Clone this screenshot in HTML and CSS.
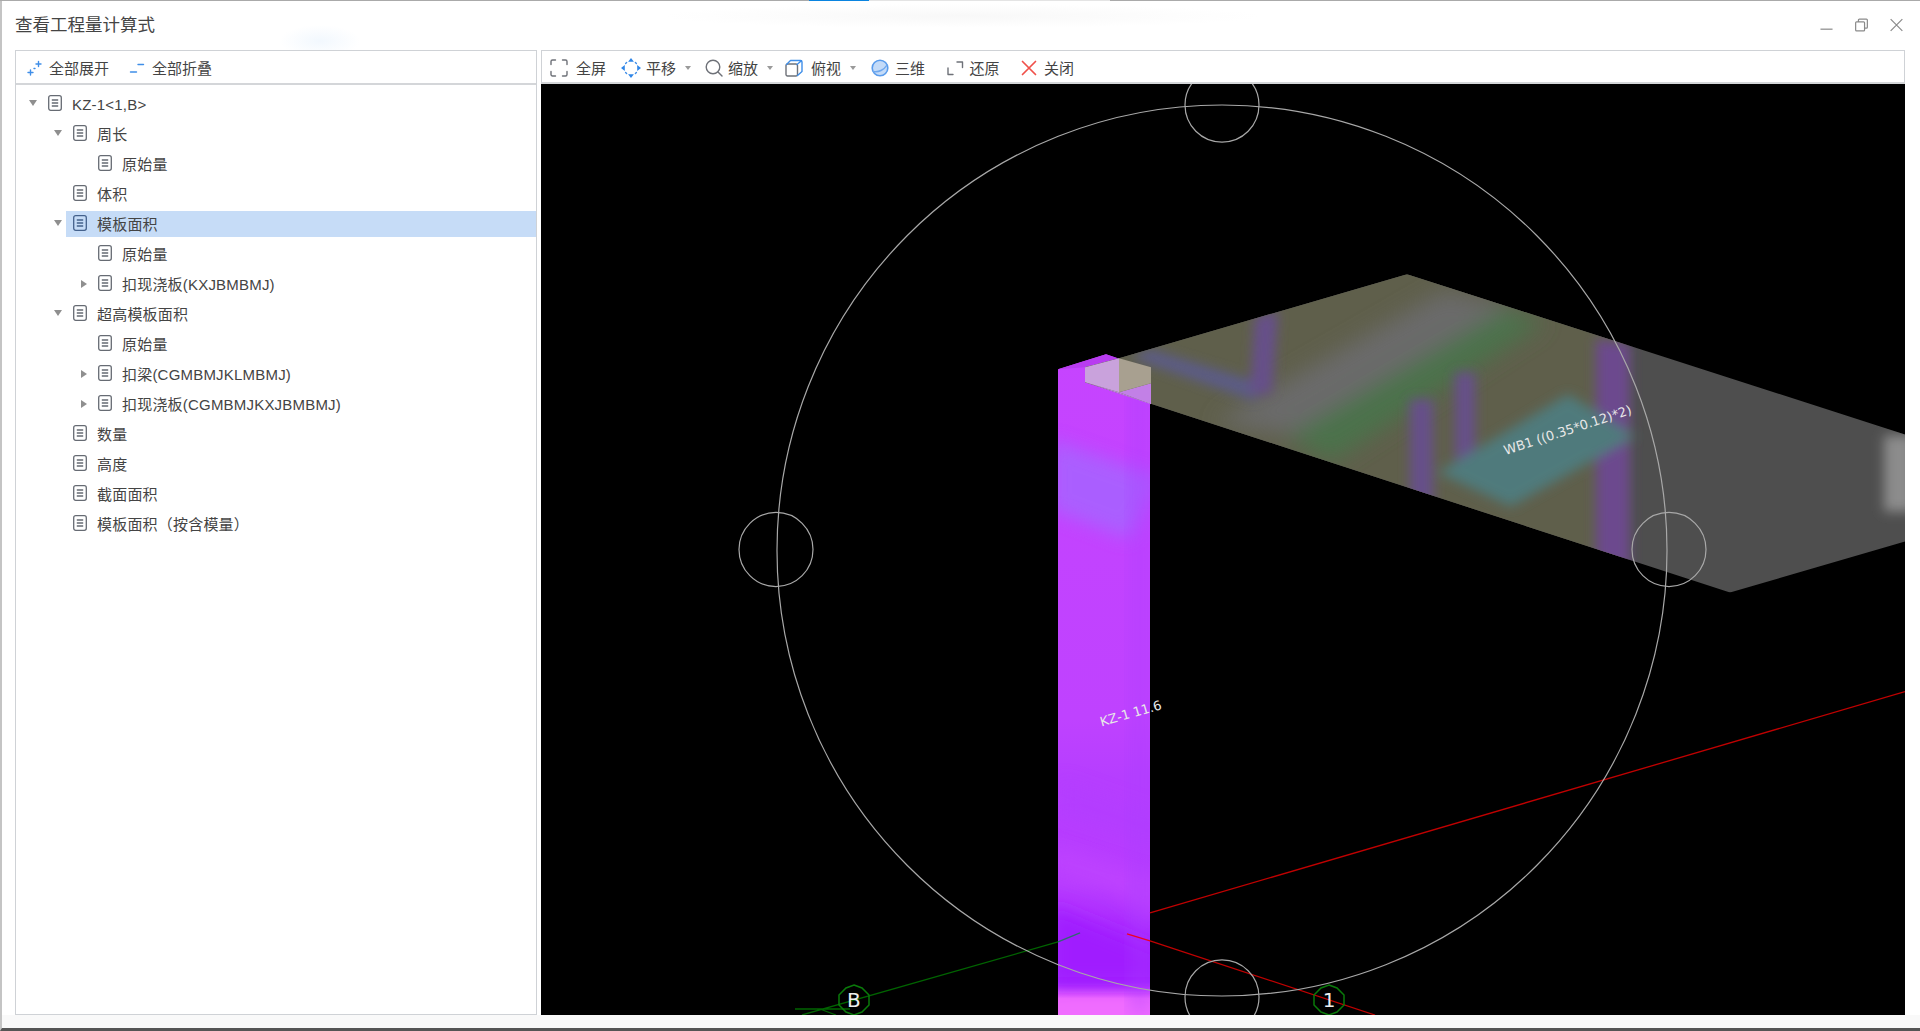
FILE: index.html
```html
<!DOCTYPE html>
<html lang="zh-CN">
<head>
<meta charset="utf-8">
<title>查看工程量计算式</title>
<link rel="stylesheet" href="styles.css">
</head>
<body>
<svg class="defs" width="0" height="0" aria-hidden="true">
  <symbol id="doc" viewBox="0 0 14 16">
    <rect x="0.7" y="0.7" width="12.6" height="14.6" rx="2"/>
    <path d="M3.8 5h6.4M3.8 8h6.4M3.8 11h6.4"/>
  </symbol>
</svg>
<div class="window">
  <div class="strip"><i class="s-gray"></i><i class="s-blue"></i><i class="s-light"></i><i class="s-rest"></i></div>
  <header class="titlebar">
    <h1 class="title">查看工程量计算式</h1>
    <div class="winctl">
      <svg class="wi" viewBox="0 0 14 14"><path d="M0.5 11.5h13"/></svg>
      <svg class="wi" viewBox="0 0 14 14"><rect x="0.7" y="3.7" width="9.6" height="9.6" rx="1"/><path d="M3.7 3.7V1.7a1 1 0 0 1 1-1h7.6a1 1 0 0 1 1 1v7.6a1 1 0 0 1-1 1h-2"/></svg>
      <svg class="wi" viewBox="0 0 14 14"><path d="M0.7 0.7l12.6 12.6M13.3 0.7L0.7 13.3"/></svg>
    </div>
  </header>
  <main class="main">
    <section class="panel left">
      <div class="bar bar-left">
        <div class="tool">
          <svg class="ti ti-s" viewBox="0 0 14 16"><path class="blue" d="M1 12.500h5M3.500 10v5M9 4h5M11.500 1.500v5M7 8.500h1"/></svg>
          <span>全部展开</span>
        </div>
        <div class="tool tool-b">
          <svg class="ti ti-s" viewBox="0 0 14 16"><path class="blue" d="M0.500 12h6M8 4.500h5.500"/></svg>
          <span>全部折叠</span>
        </div>
      </div>
      <ul class="tree">
        <li class="row l0"><i class="arr down"></i><div class="cell"><svg class="doc"><use href="#doc"/></svg><span>KZ-1&lt;1,B&gt;</span></div></li>
        <li class="row l1"><i class="arr down"></i><div class="cell"><svg class="doc"><use href="#doc"/></svg><span>周长</span></div></li>
        <li class="row l2"><i class="arr"></i><div class="cell"><svg class="doc"><use href="#doc"/></svg><span>原始量</span></div></li>
        <li class="row l1"><i class="arr"></i><div class="cell"><svg class="doc"><use href="#doc"/></svg><span>体积</span></div></li>
        <li class="row l1 sel"><i class="arr down"></i><div class="cell"><svg class="doc"><use href="#doc"/></svg><span>模板面积</span></div></li>
        <li class="row l2"><i class="arr"></i><div class="cell"><svg class="doc"><use href="#doc"/></svg><span>原始量</span></div></li>
        <li class="row l2"><i class="arr right"></i><div class="cell"><svg class="doc"><use href="#doc"/></svg><span>扣现浇板(KXJBMBMJ)</span></div></li>
        <li class="row l1"><i class="arr down"></i><div class="cell"><svg class="doc"><use href="#doc"/></svg><span>超高模板面积</span></div></li>
        <li class="row l2"><i class="arr"></i><div class="cell"><svg class="doc"><use href="#doc"/></svg><span>原始量</span></div></li>
        <li class="row l2"><i class="arr right"></i><div class="cell"><svg class="doc"><use href="#doc"/></svg><span>扣梁(CGMBMJKLMBMJ)</span></div></li>
        <li class="row l2"><i class="arr right"></i><div class="cell"><svg class="doc"><use href="#doc"/></svg><span>扣现浇板(CGMBMJKXJBMBMJ)</span></div></li>
        <li class="row l1"><i class="arr"></i><div class="cell"><svg class="doc"><use href="#doc"/></svg><span>数量</span></div></li>
        <li class="row l1"><i class="arr"></i><div class="cell"><svg class="doc"><use href="#doc"/></svg><span>高度</span></div></li>
        <li class="row l1"><i class="arr"></i><div class="cell"><svg class="doc"><use href="#doc"/></svg><span>截面面积</span></div></li>
        <li class="row l1"><i class="arr"></i><div class="cell"><svg class="doc"><use href="#doc"/></svg><span>模板面积（按含模量）</span></div></li>
      </ul>
    </section>
    <section class="panel right">
      <div class="bar bar-right">
        <div class="tool tool-full">
          <svg class="ti" viewBox="0 0 18 18"><path class="grey" d="M5.500 1H2.500a1.500 1.500 0 0 0-1.500 1.500V5.500M12.500 1h3a1.500 1.500 0 0 1 1.500 1.500V5.500M5.500 17H2.500A1.500 1.500 0 0 1 1 15.500V12.500M12.500 17h3a1.500 1.500 0 0 0 1.500-1.500V12.500"/></svg>
          <span>全屏</span>
        </div>
        <div class="tool tool-pan">
          <svg class="ti ti-pan" viewBox="0 0 20 20"><path class="fillblue" d="M10 0l2.900 3.800H7.100zM10 20l-2.900-3.800h5.800zM0 10l3.800-2.900v5.800zM20 10l-3.800 2.900V7.100z"/><path class="blue" d="M4.600 5.600L5.600 4.600M14.400 4.600L15.400 5.600M4.600 14.400L5.600 15.400M14.400 15.400L15.400 14.400"/></svg>
          <span>平移</span><i class="caret"></i>
        </div>
        <div class="tool tool-zoom">
          <svg class="ti" viewBox="0 0 18 18"><circle class="grey" cx="8" cy="8" r="6.800"/><path class="grey" d="M13 13l4 4"/></svg>
          <span>缩放</span><i class="caret"></i>
        </div>
        <div class="tool tool-top">
          <svg class="ti" viewBox="0 0 18 18"><path class="grey" d="M1 6.500a1.500 1.500 0 0 1 1.500-1.500H11a1.500 1.500 0 0 1 1.500 1.500V15.500a1.500 1.500 0 0 1-1.500 1.500H2.500A1.500 1.500 0 0 1 1 15.500z"/><path class="blue" d="M1.500 5.500L5.500 1.500H15.500a1.500 1.500 0 0 1 1.500 1.500V12.500L12.500 16.500M12 5.500L16.500 1.800"/></svg>
          <span>俯视</span><i class="caret"></i>
        </div>
        <div class="tool tool-3d">
          <svg class="ti" viewBox="0 0 18 18"><circle class="ball" cx="9" cy="9" r="7.800"/><path class="arc" d="M2.500 12.500C7.500 13.500 13 11 16 6"/></svg>
          <span>三维</span>
        </div>
        <div class="tool tool-w">
          <svg class="ti" viewBox="0 0 18 18"><path class="grey" d="M2 9v6.500h5M11 3h5.500v5.500"/></svg>
          <span>还原</span>
        </div>
        <div class="tool tool-w">
          <svg class="ti" viewBox="0 0 18 18"><path class="red" d="M2.500 2.500l13 13M15.500 2.500l-13 13"/></svg>
          <span>关闭</span>
        </div>
      </div>
      <div class="view">
        <svg class="scene" viewBox="541 85 1364 930" preserveAspectRatio="none">
          <defs>
            <linearGradient id="colG" x1="0" y1="355" x2="0" y2="1015" gradientUnits="userSpaceOnUse">
              <stop offset="0" stop-color="#c644ff"/>
              <stop offset="0.55" stop-color="#bf42ff"/>
              <stop offset="0.64" stop-color="#b63eff"/>
              <stop offset="0.8" stop-color="#b83cff"/>
              <stop offset="0.9" stop-color="#a424ff"/>
              <stop offset="0.95" stop-color="#a424ff"/>
              <stop offset="0.975" stop-color="#f06cff"/>
              <stop offset="1" stop-color="#f06cff"/>
            </linearGradient>
            <clipPath id="slabClip"><polygon points="1085,368 1119,359 1407,275 1905,435 1905,542 1730,593 1085,383"/></clipPath>
            <clipPath id="colClip"><polygon points="1058,370 1106,355 1150,370 1150,1015 1058,1015"/></clipPath>
            <filter id="b5" x="-30%" y="-30%" width="160%" height="160%"><feGaussianBlur stdDeviation="6"/></filter>
            <filter id="b7" x="-30%" y="-30%" width="160%" height="160%"><feGaussianBlur stdDeviation="11"/></filter>
            <filter id="b8" x="-30%" y="-30%" width="160%" height="160%"><feGaussianBlur stdDeviation="9"/></filter>
          </defs>
          <rect class="bg" x="541" y="85" width="1364" height="930"/>
          <polygon points="1058,370 1106,355 1150,370 1150,1015 1058,1015" fill="url(#colG)"/>
          <g clip-path="url(#colClip)">
            <polygon class="c-blue" filter="url(#b8)" points="1050,440 1160,478 1130,540 1050,510"/>
            <polygon class="c-dark" filter="url(#b8)" points="1050,905 1160,950 1160,985 1050,985"/>
            <polygon class="c-lite" filter="url(#b8)" points="1050,870 1110,890 1160,925 1160,880 1050,845"/>
            <polygon class="c-faint" filter="url(#b8)" points="1060,780 1160,815 1160,850 1060,815"/>
            <rect class="c-edge" x="1130" y="370" width="20" height="645" filter="url(#b8)"/>
          </g>
          <polygon class="c-top" points="1058,370 1106,355 1150,370 1085,368"/>
          <g clip-path="url(#slabClip)">
            <rect class="s-base" x="1080" y="270" width="830" height="330"/>
            <rect class="s-olive" x="1060" y="260" width="565" height="350" filter="url(#b5)"/>
            <g filter="url(#b7)">
              <polygon class="s-gr" points="1444,292 1515,307 1302,437 1215,423"/>
              <polygon class="s-green" points="1506,310 1545,323 1332,462 1287,437"/>
            </g>
            <g filter="url(#b5)">
              <polygon class="s-pd" points="1130,358 1150,350 1265,385 1255,402"/>
              <polygon class="s-p" points="1255,317 1278,312 1272,395 1250,395"/>
              <polygon class="s-p" points="1410,400 1433,400 1433,520 1410,510"/>
              <polygon class="s-p" points="1455,373 1475,373 1475,470 1455,470"/>
              <polygon class="s-p2" points="1596,340 1630,345 1630,570 1596,560"/>
              <polygon class="s-teal" points="1568,395 1635,437 1511,507 1438,473"/>
              <rect class="s-patch" x="1884" y="436" width="30" height="76"/>
            </g>
          </g>
          <polygon class="h-col" points="1119,393 1151,384 1151,405"/>
          <polygon class="h-col" points="1085,383 1119,393 1151,405"/>
          <polygon class="h-left" points="1085,368 1119,359 1119,393 1085,383"/>
          <polygon class="h-right" points="1119,359 1151,368 1151,384 1119,393"/>
          <path class="l-red" d="M1150 913L1905 692"/>
          <path class="l-red" d="M1150 941L1375 1015"/>
          <path class="l-red2" d="M1127 934L1150 941"/>
          <path class="l-green" d="M1058 942L802 1015M795 1009H850M820 1009L836 1015"/>
          <path class="l-teal" d="M1080 933L1058 942"/>
          <circle class="ring" cx="1222" cy="551" r="445"/>
          <ellipse class="ring" cx="1222" cy="106" rx="37" ry="37"/>
          <ellipse class="ring" cx="776" cy="550" rx="37" ry="37"/>
          <ellipse class="ring" cx="1669" cy="550" rx="37" ry="37"/>
          <ellipse class="ring" cx="1222" cy="997" rx="37" ry="37"/>
          <polygon class="axis" points="854,985 862,988 869,995 869,1005 862,1012 854,1015 846,1012 839,1005 839,995 846,988"/>
          <polygon class="axis" points="1329,985 1337,988 1344,995 1344,1005 1337,1012 1329,1015 1321,1012 1314,1005 1314,995 1321,988"/>
          <text class="axt" x="854" y="1007">B</text>
          <text class="axt" x="1329" y="1007">1</text>
          <text class="lbl" transform="translate(1569 435) rotate(-18)">WB1 ((0.35*0.12)*2)</text>
          <text class="lbl" transform="translate(1132 718) rotate(-16)">KZ-1 11.6</text>
        </svg>
      </div>
    </section>
  </main>
  <footer class="footer"></footer>
</div>
</body>
</html>
```

FILE: styles.css
```css
* { box-sizing: border-box; }
html, body { margin: 0; padding: 0; height: 100%; background: #fff; overflow: hidden; }
body { font-family: "Noto Sans CJK SC", "Liberation Sans", sans-serif; color: #444; }
.defs { display: block; }

.window {
  height: 1031px;
  display: flex;
  flex-direction: column;
  border-left: 2px solid #c4c4c4;
  border-bottom: 3px solid #555;
  background: #fff;
}
.strip { display: flex; height: 1px; margin-left: -2px; flex: none; }
.strip i { display: block; height: 1px; }
.s-gray { width: 809px; background: #aaa; }
.s-blue { width: 60px; background: #0a84e0; }
.s-light { width: 241px; background: #e4e4e4; }
.s-rest { flex: 1; background: #aaa; }

.titlebar {
  height: 49px;
  flex: none;
  display: flex;
  align-items: flex-start;
  justify-content: space-between;
  padding: 13px 17px 0 13px;
  background:
    radial-gradient(ellipse 40px 16px at 318px 40px, #f2f8fe, rgba(242,248,254,0)),
    radial-gradient(ellipse 300px 12px at 960px 15px, #f8f8f8, rgba(248,248,248,0));
}
.title { margin: 0; font-size: 17.500px; font-weight: 400; line-height: 20px; color: #444; }
.winctl { display: flex; gap: 22px; margin-top: 4px; }
.wi { width: 13px; height: 14px; fill: none; stroke: #8a8a8a; stroke-width: 1.300; }

.main { flex: 1; display: flex; gap: 4px; padding: 0 15px 0 13px; min-height: 0; }
.panel { display: flex; flex-direction: column; min-width: 0; }
.panel.left { width: 522px; flex: none; border: 1px solid #cfd2d6; }
.panel.right { flex: 1; }

.bar { height: 34px; flex: none; display: flex; align-items: center; font-size: 15px; background: #fff; padding-top: 2px; }
.bar-left { border-bottom: 2px solid #d4d6d9; padding-left: 11px; gap: 17px; }
.bar-right { border: 1px solid #cfd2d6; border-bottom: 2px solid #d4d6d9; padding-left: 8px; gap: 13px; }
.tool { display: flex; align-items: center; height: 100%; }
.tool span { line-height: 20px; }
.ti { width: 18px; height: 18px; margin-right: 5px; flex: none; overflow: visible; }
.ti-s { width: 14px; height: 16px; margin-right: 8px; }
.ti-pan { width: 20px; height: 20px; margin-right: 5px; }
.tool-b { margin-left: 4px; }
.tool-full .ti { margin-right: 8px; }
.tool-pan { margin-left: 2px; }
.tool-zoom { margin-left: 1px; }
.tool-top { margin-left: -1px; }
.tool-top .ti { margin-right: 8px; }
.tool-3d { margin-left: 2px; }
.tool-3d .ti, .tool-w .ti { margin-right: 6px; }
.tool-w { margin-left: 7.500px; }
.caret {
  display: block;
  width: 0;
  height: 0;
  margin-left: 9px;
  border-left: 3.500px solid transparent;
  border-right: 3.500px solid transparent;
  border-top: 4px solid #9a9a9a;
}
.grey, .blue, .red, .arc { fill: none; stroke-width: 1.400; stroke-linecap: round; stroke-linejoin: round; }
.grey { stroke: #6e7178; }
.blue { stroke: #3f8ee8; }
.arc { stroke: #6fa8ee; }
.red { stroke: #f0504a; stroke-width: 1.700; }
.fillblue { fill: #2f86e8; }
.ball { fill: #c4dbf8; stroke: #5a9cec; stroke-width: 1.600; }

.tree { list-style: none; margin: 0; padding: 4px 0 0; flex: 1; }
.row { height: 30px; display: flex; align-items: center; font-size: 15px; font-family: "Liberation Sans", "Noto Sans CJK SC", sans-serif; }
.l0 { padding-left: 13px; }
.l1 { padding-left: 38px; }
.l2 { padding-left: 63px; }
.arr { display: block; width: 12px; height: 8px; flex: none; }
.arr.down::before {
  content: "";
  display: block;
  width: 0;
  height: 0;
  border-left: 4.500px solid transparent;
  border-right: 4.500px solid transparent;
  border-top: 6px solid #8f8f8f;
}
.arr.right::before {
  content: "";
  display: block;
  width: 0;
  height: 0;
  margin-left: 2px;
  border-top: 4.500px solid transparent;
  border-bottom: 4.500px solid transparent;
  border-left: 6px solid #8f8f8f;
}
.cell { flex: 1; height: 26px; display: flex; align-items: center; padding-left: 7px; gap: 10px; }
.sel .cell { background: #c6dcf7; }
.doc { width: 14px; height: 16px; flex: none; margin-top: -3px; fill: none; stroke: #666b73; stroke-width: 1.300; }
.sel .doc { stroke: #44618c; }
.cell span { white-space: pre; line-height: 20px; letter-spacing: 0.200px; padding-top: 2px; }

.view { flex: 1; min-height: 0; background: #000; }
.scene { display: block; width: 100%; height: 100%; }
.bg { fill: #000; }
.c-blue { fill: #a862ff; opacity: .9; }
.c-dark { fill: #a01eff; }
.c-lite { fill: #c044ff; opacity: .7; }
.c-faint { fill: #b23cff; opacity: .6; }
.c-edge { fill: #a83cff; opacity: .35; }
.c-top { fill: #b83cf0; }
.s-base { fill: #4e4e4e; }
.s-olive { fill: #5f5f4b; }
.s-gr { fill: #6a6a6a; }
.s-green { fill: #4c724c; }
.s-pd { fill: #5b5b86; }
.s-p { fill: #66508a; }
.s-p2 { fill: #6c4a8e; }
.s-teal { fill: #4f7a7c; }
.s-patch { fill: #8c8c8c; }
.h-col { fill: #c280e6; }
.h-left { fill: #c9a2dc; }
.h-right { fill: #a8a090; }
.l-red { stroke: #c00000; stroke-width: 1.300; fill: none; }
.l-red2 { stroke: #f00020; stroke-width: 1.300; fill: none; }
.l-green { stroke: #006400; stroke-width: 1.300; fill: none; }
.l-teal { stroke: #2e6a70; stroke-width: 1.300; fill: none; }
.ring { fill: none; stroke: #a8a8a8; stroke-width: 1.200; }
.axis { fill: none; stroke: #0a7a0a; stroke-width: 1.500; }
.axt { fill: #eee; font-family: "DejaVu Sans", sans-serif; font-size: 20px; text-anchor: middle; }
.lbl { fill: #e8e8e8; font-family: "DejaVu Sans", sans-serif; font-size: 13px; text-anchor: middle; }

.footer { height: 13px; flex: none; background: #f9f9f9; }
```
